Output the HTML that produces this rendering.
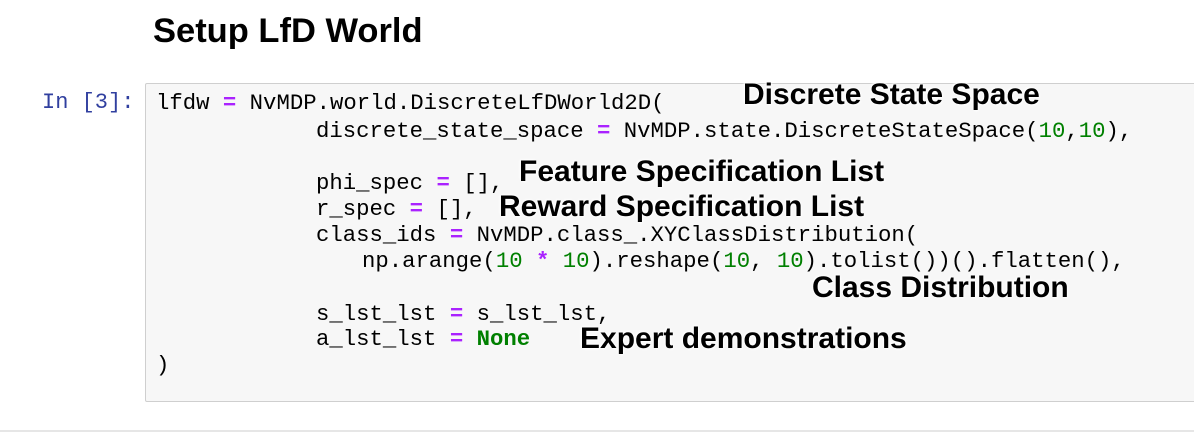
<!DOCTYPE html>
<html><head><style>
body{margin:0;width:1194px;height:432px;background:#fff;position:relative;overflow:hidden;font-family:"Liberation Sans",sans-serif}
.h{position:absolute;left:153px;top:12px;font-size:34.5px;font-weight:bold;color:#000}
.box{position:absolute;left:145px;top:83px;width:1060px;height:317px;background:#f7f7f7;border:1px solid #cfcfcf;border-radius:2px}
.bl{position:absolute;left:0;top:430px;width:1194px;height:2px;background:#e6e6e6}
.p{position:absolute;left:42px;top:90px;font-family:"Liberation Mono",monospace;font-size:22px;color:#303F9F;white-space:pre}
.c{position:absolute;font-family:"Liberation Mono",monospace;font-size:22.3px;color:#000;white-space:pre;line-height:26px}
.o{color:#aa22ff;font-weight:bold}.n{color:#008000}.k{color:#008000;font-weight:bold}
.l{position:absolute;font-size:30px;font-weight:bold;color:#000;white-space:nowrap;text-shadow:0 0 2px #fff,1px 1px 2px #fff,-1px -1px 2px #fff}
</style></head><body>
<div class="h">Setup LfD World</div>
<div class="box"></div>
<div class="bl"></div>
<div class="p">In [3]:</div>
<div class="c" style="left:156px;top:90px">lfdw <span class="o">=</span> NvMDP.world.DiscreteLfDWorld2D(</div>
<div class="c" style="left:316px;top:118px">discrete_state_space <span class="o">=</span> NvMDP.state.DiscreteStateSpace(<span class="n">10</span>,<span class="n">10</span>),</div>
<div class="c" style="left:316px;top:170px">phi_spec <span class="o">=</span> [],</div>
<div class="c" style="left:316px;top:196px">r_spec <span class="o">=</span> [],</div>
<div class="c" style="left:316px;top:222px">class_ids <span class="o">=</span> NvMDP.class_.XYClassDistribution(</div>
<div class="c" style="left:362px;top:248px">np.arange(<span class="n">10</span> <span class="o">*</span> <span class="n">10</span>).reshape(<span class="n">10</span>, <span class="n">10</span>).tolist())().flatten(),</div>
<div class="c" style="left:316px;top:301px">s_lst_lst <span class="o">=</span> s_lst_lst,</div>
<div class="c" style="left:316px;top:326px">a_lst_lst <span class="o">=</span> <span class="k">None</span></div>
<div class="c" style="left:156px;top:352px">)</div>
<div class="l" style="left:743px;top:78px">Discrete State Space</div>
<div class="l" style="left:519px;top:155px">Feature Specification List</div>
<div class="l" style="left:499px;top:190px">Reward Specification List</div>
<div class="l" style="left:812px;top:271px">Class Distribution</div>
<div class="l" style="left:580px;top:322px">Expert demonstrations</div>
</body></html>
